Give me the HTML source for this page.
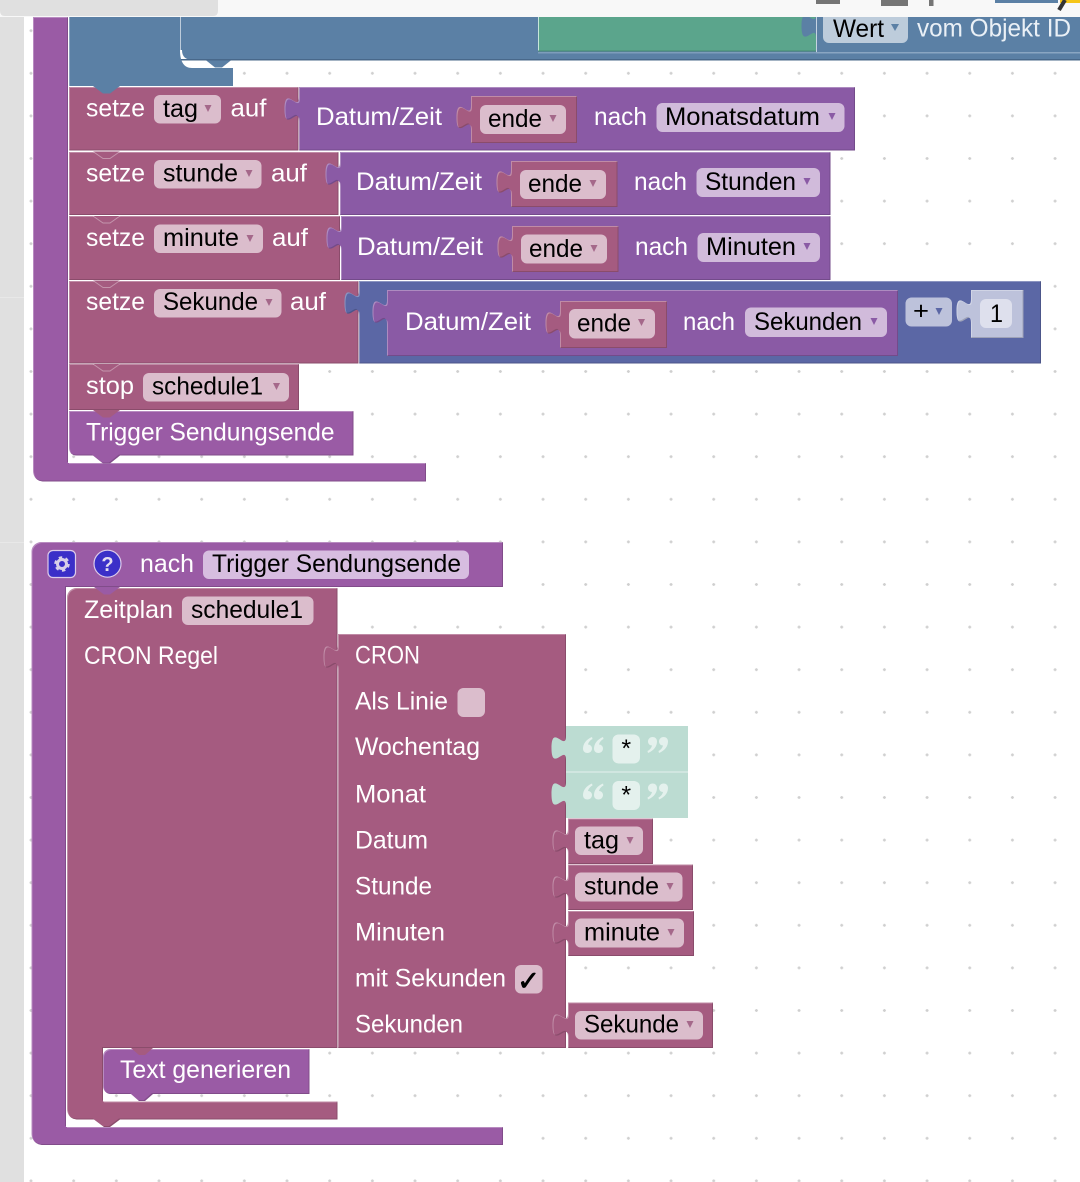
<!DOCTYPE html>
<html lang="de">
<head>
<meta charset="utf-8">
<title>Blockly</title>
<style>
html,body{margin:0;padding:0;background:#fff;width:1080px;height:1182px;overflow:hidden}
svg{display:block}
text{font-family:"Liberation Sans","DejaVu Sans",sans-serif;font-size:25px}
.w{fill:#fff}
.k{fill:#000}
.R{fill:#a55b80}
.P{fill:#9a5ba5}
.D{fill:#8a5aa5}
.B{fill:#5b80a5}
.M{fill:#5b67a5}
.fr{fill:#dbbdcc}
.fp{fill:#d1bbdb}
.fh{fill:#d7bde0}
.ar{fill:#a5688a}
.ap{fill:#8a5aa5}
.ln{fill:#a55b80;stroke:#fff;stroke-opacity:.35;stroke-width:1}
</style>
</head>
<body>
<svg xmlns="http://www.w3.org/2000/svg" width="1080" height="1182" viewBox="0 0 1080 1182">
<defs>
<pattern id="g" patternUnits="userSpaceOnUse" x="29" y="28.7" width="42.67" height="42.6">
<path d="M0.5 2H3.5M2 0.5V3.5" stroke="#cfcfcf" stroke-width="1.4" fill="none"/>
</pattern>
<filter id="e" filterUnits="userSpaceOnUse" x="0" y="0" width="1080" height="1182" color-interpolation-filters="sRGB">
<feOffset in="SourceAlpha" dx="1" dy="1" result="a"/>
<feFlood flood-color="#fff" flood-opacity=".3"/>
<feComposite in2="SourceAlpha" operator="in"/>
<feComposite in2="a" operator="out" result="hi"/>
<feOffset in="SourceAlpha" dx="-1" dy="-1" result="c"/>
<feFlood flood-color="#000" flood-opacity=".16"/>
<feComposite in2="SourceAlpha" operator="in"/>
<feComposite in2="c" operator="out" result="lo"/>
<feMerge><feMergeNode in="SourceGraphic"/><feMergeNode in="hi"/><feMergeNode in="lo"/></feMerge>
</filter>
<path id="q" d="M9 0C3 2.500 0 7 0 11.500C0 14.500 2 16 4.500 16C7 16 9 14 9 11.500C9 9 7 7.500 5 7.500C5.500 5 7.500 3 9.500 2Z"/>
</defs>

<rect width="1080" height="1182" fill="#fff"/>
<rect width="1080" height="1182" fill="url(#g)"/>
<rect x="0" y="17" width="24" height="1165" fill="#e0e0e0"/>
<rect x="0" y="297" width="24" height="1" fill="#e8e8e8"/>
<rect x="0" y="542" width="24" height="1" fill="#e8e8e8"/>

<!-- upper blue statements -->
<rect x="69" y="17" width="164" height="69" class="B"/>
<rect x="181" y="17" width="899" height="43" class="B"/>
<rect x="69" y="17" width="1" height="69" fill="#fff" fill-opacity=".3"/>
<rect x="180" y="17" width="1" height="33" fill="#fff" fill-opacity=".6"/>
<path d="M180 50C180 62 184 68 192 68H233V60H193C186 60 182 57 182 50Z" fill="#fff"/>
<path d="M205 59.500H232L222 67.500H215Z" class="B"/>
<rect x="181" y="59" width="899" height="1.500" fill="#48688a"/>
<rect x="538" y="17" width="278" height="34" fill="#5ba58c"/>
<rect x="538" y="17" width="1" height="34" fill="#c7e6da"/>
<rect x="538" y="50.500" width="278" height="1" fill="#4a8a75"/>
<path d="M816 38c0-16-14.500 13-14.500-12s14.500 4 14.500-12Z" class="B"/>
<rect x="816" y="52" width="264" height="1.500" fill="#8aa6c2"/>
<rect x="538" y="52" width="278" height="1.500" fill="#7e9dbb"/>
<rect x="816" y="17" width="1" height="35" fill="#c5d3e2"/>
<rect x="823" y="10" width="85" height="33" rx="6" fill="#bdccdb"/>
<text x="833" y="37" class="k" textLength="51" lengthAdjust="spacingAndGlyphs">Wert</text>
<path d="M891 24h8l-4 7z" fill="#5b80a5"/>
<text x="917" y="36.500" fill="#eaf0f6" textLength="154" lengthAdjust="spacingAndGlyphs">vom Objekt ID</text>

<!-- first outer purple -->
<path d="M33 17H68V463H426V481.500H44C37 481.500 33 477 33 470Z" class="P" filter="url(#e)"/>

<!-- row 1 -->
<rect x="69" y="87" width="229.500" height="63.500" class="R" filter="url(#e)"/>
<path d="M93 86H120L110 93.500H103Z" class="B"/>
<path d="M299 87H855V150.500H299V121c0-16-14.500 13-14.500-12s14.500 4 14.500-12Z" class="D" filter="url(#e)"/>
<path d="M471 96H577V143H471V129.500c0-16-14.500 13-14.500-12s14.500 4 14.500-12Z" class="R" filter="url(#e)"/>
<text x="86" y="116.500" class="w" textLength="59" lengthAdjust="spacingAndGlyphs">setze</text>
<rect x="154" y="95" width="67" height="28.500" rx="6" class="fr"/>
<text x="163" y="117" class="k" textLength="35" lengthAdjust="spacingAndGlyphs">tag</text>
<path d="M204.500 105h7l-3.500 7z" class="ar"/>
<text x="230.500" y="116.500" class="w" textLength="36" lengthAdjust="spacingAndGlyphs">auf</text>
<text x="316" y="125" class="w" textLength="126" lengthAdjust="spacingAndGlyphs">Datum/Zeit</text>
<rect x="480" y="105" width="86" height="29" rx="6" class="fr"/>
<text x="488" y="127" class="k" textLength="54" lengthAdjust="spacingAndGlyphs">ende</text>
<path d="M549.500 115h7l-3.500 7z" class="ar"/>
<text x="594" y="125" class="w" textLength="53" lengthAdjust="spacingAndGlyphs">nach</text>
<rect x="656.500" y="103" width="188" height="29" rx="6" class="fp"/>
<text x="665" y="125" class="k" textLength="155" lengthAdjust="spacingAndGlyphs">Monatsdatum</text>
<path d="M828.500 113h7l-3.500 7z" class="ap"/>

<!-- row 2 -->
<rect x="69" y="152" width="269.500" height="63" class="R" filter="url(#e)"/>
<path d="M93 151.500L103 158.500H110L120 151.500" class="ln"/>
<path d="M340 152H830.500V215H340V186c0-16-14.500 13-14.500-12s14.500 4 14.500-12Z" class="D" filter="url(#e)"/>
<path d="M511 161H617.500V207H511V194c0-16-14.500 13-14.500-12s14.500 4 14.500-12Z" class="R" filter="url(#e)"/>
<text x="86" y="181.500" class="w" textLength="59" lengthAdjust="spacingAndGlyphs">setze</text>
<rect x="154" y="160" width="107.500" height="28.500" rx="6" class="fr"/>
<text x="163" y="181.500" class="k" textLength="75" lengthAdjust="spacingAndGlyphs">stunde</text>
<path d="M245.500 170h7l-3.500 7z" class="ar"/>
<text x="271" y="181.500" class="w" textLength="36" lengthAdjust="spacingAndGlyphs">auf</text>
<text x="356" y="190" class="w" textLength="126" lengthAdjust="spacingAndGlyphs">Datum/Zeit</text>
<rect x="520" y="170" width="86" height="29" rx="6" class="fr"/>
<text x="528" y="192" class="k" textLength="54" lengthAdjust="spacingAndGlyphs">ende</text>
<path d="M589.500 180h7l-3.500 7z" class="ar"/>
<text x="634" y="190" class="w" textLength="53" lengthAdjust="spacingAndGlyphs">nach</text>
<rect x="696.500" y="168" width="123.500" height="29" rx="6" class="fp"/>
<text x="705" y="190" class="k" textLength="91" lengthAdjust="spacingAndGlyphs">Stunden</text>
<path d="M803.500 178h7l-3.500 7z" class="ap"/>

<!-- row 3 -->
<rect x="69" y="216" width="271" height="64" class="R" filter="url(#e)"/>
<path d="M93 216L103 223H110L120 216" class="ln"/>
<path d="M341 216H830.500V280H341V250c0-16-14.500 13-14.500-12s14.500 4 14.500-12Z" class="D" filter="url(#e)"/>
<path d="M512 226H618.500V272H512V259c0-16-14.500 13-14.500-12s14.500 4 14.500-12Z" class="R" filter="url(#e)"/>
<text x="86" y="246" class="w" textLength="59" lengthAdjust="spacingAndGlyphs">setze</text>
<rect x="154" y="224.500" width="109" height="28.500" rx="6" class="fr"/>
<text x="163" y="246" class="k" textLength="76" lengthAdjust="spacingAndGlyphs">minute</text>
<path d="M246.500 235h7l-3.500 7z" class="ar"/>
<text x="272" y="246" class="w" textLength="36" lengthAdjust="spacingAndGlyphs">auf</text>
<text x="357" y="255" class="w" textLength="126" lengthAdjust="spacingAndGlyphs">Datum/Zeit</text>
<rect x="521" y="234.500" width="86" height="29" rx="6" class="fr"/>
<text x="529" y="257" class="k" textLength="54" lengthAdjust="spacingAndGlyphs">ende</text>
<path d="M590.500 245h7l-3.500 7z" class="ar"/>
<text x="635" y="255" class="w" textLength="53" lengthAdjust="spacingAndGlyphs">nach</text>
<rect x="697.500" y="233" width="122.500" height="29" rx="6" class="fp"/>
<text x="706" y="255" class="k" textLength="90" lengthAdjust="spacingAndGlyphs">Minuten</text>
<path d="M803.500 243h7l-3.500 7z" class="ap"/>

<!-- row 4 -->
<rect x="69" y="281" width="289.500" height="82.500" class="R" filter="url(#e)"/>
<path d="M93 280.500L103 287.500H110L120 280.500" class="ln"/>
<path d="M359 281H1041V363.500H359V315c0-16-14.500 13-14.500-12s14.500 4 14.500-12Z" class="M" filter="url(#e)"/>
<path d="M387 290H898V356H387V324c0-16-14.500 13-14.500-12s14.500 4 14.500-12Z" class="D" filter="url(#e)"/>
<path d="M560 301H667V348H560V335c0-16-14.500 13-14.500-12s14.500 4 14.500-12Z" class="R" filter="url(#e)"/>
<path d="M971 290H1023.500V338H971V323c0-16-14.500 13-14.500-12s14.500 4 14.500-12Z" fill="#bdc2db" filter="url(#e)"/>
<text x="86" y="310" class="w" textLength="59" lengthAdjust="spacingAndGlyphs">setze</text>
<rect x="154" y="289" width="127.500" height="28.500" rx="6" class="fr"/>
<text x="163" y="310" class="k" textLength="95" lengthAdjust="spacingAndGlyphs">Sekunde</text>
<path d="M265.500 299h7l-3.500 7z" class="ar"/>
<text x="290" y="310" class="w" textLength="36" lengthAdjust="spacingAndGlyphs">auf</text>
<text x="405" y="330" class="w" textLength="126" lengthAdjust="spacingAndGlyphs">Datum/Zeit</text>
<rect x="569" y="309" width="86" height="29.500" rx="6" class="fr"/>
<text x="577" y="331.500" class="k" textLength="54" lengthAdjust="spacingAndGlyphs">ende</text>
<path d="M638 319h7l-3.500 7z" class="ar"/>
<text x="683" y="330" class="w" textLength="52" lengthAdjust="spacingAndGlyphs">nach</text>
<rect x="745" y="307.500" width="142" height="29.500" rx="6" class="fp"/>
<text x="754" y="330" class="k" textLength="108" lengthAdjust="spacingAndGlyphs">Sekunden</text>
<path d="M870.500 318h7l-3.500 7z" class="ap"/>
<rect x="905.500" y="297.500" width="46.500" height="29" rx="6" fill="#bdc2db"/>
<text x="913" y="319" class="k" textLength="16" lengthAdjust="spacingAndGlyphs">+</text>
<path d="M935.500 308h7l-3.500 7z" fill="#5b67a5"/>
<rect x="980" y="299" width="32" height="29" rx="6" fill="#dee0ed"/>
<text x="990" y="322" class="k" textLength="13" lengthAdjust="spacingAndGlyphs">1</text>

<!-- row 5 -->
<rect x="69" y="364" width="230" height="46" class="R" filter="url(#e)"/>
<path d="M93 364L103 371H110L120 364" class="ln"/>
<text x="86" y="394" class="w" textLength="48" lengthAdjust="spacingAndGlyphs">stop</text>
<rect x="143" y="373" width="146" height="28.500" rx="6" class="fr"/>
<text x="152" y="394.500" class="k" textLength="111" lengthAdjust="spacingAndGlyphs">schedule1</text>
<path d="M273 383h7l-3.500 7z" class="ar"/>

<!-- row 6 -->
<path d="M69 411H353.500V455.500H120L110 463.500H103L93 455.500H77Q69 455.500 69 447Z" class="P" filter="url(#e)"/>
<path d="M93 410H120L110 417.500H103Z" class="R"/>
<text x="86" y="440.500" class="w" textLength="248.500" lengthAdjust="spacingAndGlyphs">Trigger Sendungsende</text>

<!-- second outer purple -->
<path d="M42 542H503V587H66V1127H503V1145H43C36 1145 31.500 1140 31.500 1133V552C31.500 546 36 542 42 542Z" class="P" filter="url(#e)"/>
<rect x="48" y="550.500" width="27.500" height="27" rx="5" fill="#3b2fc8" stroke="#dccbea" stroke-width="1.200"/>
<circle cx="62" cy="564" r="4.500" fill="none" stroke="#d8d0e8" stroke-width="3"/>
<circle cx="62" cy="564" r="6.500" fill="none" stroke="#d8d0e8" stroke-width="2.500" stroke-dasharray="3.400 3.407"/>
<circle cx="107.500" cy="563.700" r="13.500" fill="#3b2fc8" stroke="#dccbea" stroke-width="1.200"/>
<text x="107.500" y="571" fill="#e4dcf0" text-anchor="middle" style="font-size:20px;font-weight:bold">?</text>
<text x="140" y="572" class="w" textLength="54" lengthAdjust="spacingAndGlyphs">nach</text>
<rect x="203" y="550.500" width="266" height="28.500" rx="6" class="fh"/>
<text x="212" y="572" class="k" textLength="249" lengthAdjust="spacingAndGlyphs">Trigger Sendungsende</text>

<!-- Zeitplan block -->
<path d="M77 588H337.500V1048H103V1101.500H337.500V1119.500H120L110 1127H104L94 1119.500H78C71 1119.500 67 1115 67 1108V598C67 592 71 588 77 588Z" class="R" filter="url(#e)"/>
<path d="M94 587H120L110 594.500H104Z" class="P"/>
<text x="84" y="618" class="w" textLength="89" lengthAdjust="spacingAndGlyphs">Zeitplan</text>
<rect x="182" y="596.500" width="131.500" height="28.500" rx="6" class="fr"/>
<text x="191" y="618" class="k" textLength="112" lengthAdjust="spacingAndGlyphs">schedule1</text>
<text x="84" y="664" class="w" textLength="134" lengthAdjust="spacingAndGlyphs">CRON Regel</text>

<!-- CRON block -->
<path d="M338 634H566V1048H338V669c0-16-14.500 13-14.500-12s14.500 4 14.500-12Z" class="R" filter="url(#e)"/>
<text x="355" y="663.500" class="w" textLength="65" lengthAdjust="spacingAndGlyphs">CRON</text>
<text x="355" y="709.500" class="w" textLength="93" lengthAdjust="spacingAndGlyphs">Als Linie</text>
<rect x="457.500" y="688" width="27.500" height="29" rx="6" class="fr"/>
<text x="355" y="755" class="w" textLength="125" lengthAdjust="spacingAndGlyphs">Wochentag</text>
<text x="355" y="802.500" class="w" textLength="71" lengthAdjust="spacingAndGlyphs">Monat</text>
<text x="355" y="848.500" class="w" textLength="73" lengthAdjust="spacingAndGlyphs">Datum</text>
<text x="355" y="894.500" class="w" textLength="77" lengthAdjust="spacingAndGlyphs">Stunde</text>
<text x="355" y="940.500" class="w" textLength="90" lengthAdjust="spacingAndGlyphs">Minuten</text>
<text x="355" y="986.500" class="w" textLength="151" lengthAdjust="spacingAndGlyphs">mit Sekunden</text>
<rect x="515" y="965" width="27.500" height="28.500" rx="6" class="fr"/>
<text x="528.500" y="990" class="k" text-anchor="middle" stroke="#000" stroke-width=".8" style="font-family:'DejaVu Sans',sans-serif;font-size:27px;font-weight:bold">✓</text>
<text x="355" y="1032.500" class="w" textLength="108" lengthAdjust="spacingAndGlyphs">Sekunden</text>

<!-- text strings -->
<path d="M566 726H688V772H566V760c0-16-14.500 13-14.500-12s14.500 4 14.500-12Z" fill="#bcdcd2"/>
<path d="M566 772H688V818H566V806c0-16-14.500 13-14.500-12s14.500 4 14.500-12Z" fill="#bcdcd2"/>
<rect x="566" y="771.500" width="122" height="1" fill="#fff" fill-opacity=".6"/>
<g fill="#e4f1ed">
<rect x="612.500" y="734.500" width="27.500" height="29" rx="6"/>
<rect x="612.500" y="781" width="27.500" height="29" rx="6"/>
<use href="#q" x="583" y="737"/><use href="#q" x="594" y="737"/>
<use href="#q" x="583" y="783.500"/><use href="#q" x="594" y="783.500"/>
<use href="#q" transform="rotate(180 658 745)" x="648" y="737"/>
<use href="#q" transform="rotate(180 658 745)" x="659" y="737"/>
<use href="#q" transform="rotate(180 658 791.500)" x="648" y="783.500"/>
<use href="#q" transform="rotate(180 658 791.500)" x="659" y="783.500"/>
</g>
<text x="626.200" y="757" class="k" text-anchor="middle" style="font-size:25px">*</text>
<text x="626.200" y="803.500" class="k" text-anchor="middle" style="font-size:25px">*</text>

<!-- variables -->
<path d="M568 818.500H653V864H568V853c0-16-15.500 13-15.500-12s15.500 4 15.500-12Z" class="R" filter="url(#e)"/>
<rect x="575" y="826.500" width="68" height="28.500" rx="6" class="fr"/>
<text x="584" y="848.500" class="k" textLength="35" lengthAdjust="spacingAndGlyphs">tag</text>
<path d="M626.500 837h7l-3.500 7z" class="ar"/>

<path d="M568 864.500H693V910H568V899c0-16-15.500 13-15.500-12s15.500 4 15.500-12Z" class="R" filter="url(#e)"/>
<rect x="575" y="872.500" width="107.500" height="29" rx="6" class="fr"/>
<text x="584" y="894.500" class="k" textLength="75" lengthAdjust="spacingAndGlyphs">stunde</text>
<path d="M666.500 883h7l-3.500 7z" class="ar"/>

<path d="M568 911H694V956H568V945c0-16-15.500 13-15.500-12s15.500 4 15.500-12Z" class="R" filter="url(#e)"/>
<rect x="575" y="918.500" width="109" height="29" rx="6" class="fr"/>
<text x="584" y="940.500" class="k" textLength="76" lengthAdjust="spacingAndGlyphs">minute</text>
<path d="M667.500 929h7l-3.500 7z" class="ar"/>

<path d="M568 1002.500H713V1048H568V1037c0-16-15.500 13-15.500-12s15.500 4 15.500-12Z" class="R" filter="url(#e)"/>
<rect x="575" y="1011" width="128" height="28.500" rx="6" class="fr"/>
<text x="584" y="1032.500" class="k" textLength="95" lengthAdjust="spacingAndGlyphs">Sekunde</text>
<path d="M686.500 1021h7l-3.500 7z" class="ar"/>

<!-- Text generieren -->
<path d="M111 1049H309.500V1094H153L145 1101H139L131 1094H111C106 1094 103 1090 103 1086V1057C103 1052 106 1049 111 1049Z" class="P" filter="url(#e)"/>
<path d="M131 1048H153L145 1055H139Z" class="R"/>
<text x="120" y="1078" class="w" textLength="171" lengthAdjust="spacingAndGlyphs">Text generieren</text>

<!-- top bar -->
<rect x="0" y="0" width="1080" height="17" fill="#f8f8f8"/>
<path d="M0 0H218V11Q218 16 213 16H5Q0 16 0 11Z" fill="#e0e0e0"/>
<rect x="816" y="0" width="24" height="4" fill="#757575"/>
<rect x="881" y="0" width="27" height="6" fill="#757575"/>
<rect x="929" y="0" width="4.500" height="6" fill="#757575"/>
<rect x="995" y="0" width="63" height="3" fill="#5b80a5"/>
<rect x="1060" y="0" width="20" height="3" fill="#f5c518"/>
<path d="M1065 0L1059 10" stroke="#333" stroke-width="4" fill="none"/>
</svg>
</body>
</html>
